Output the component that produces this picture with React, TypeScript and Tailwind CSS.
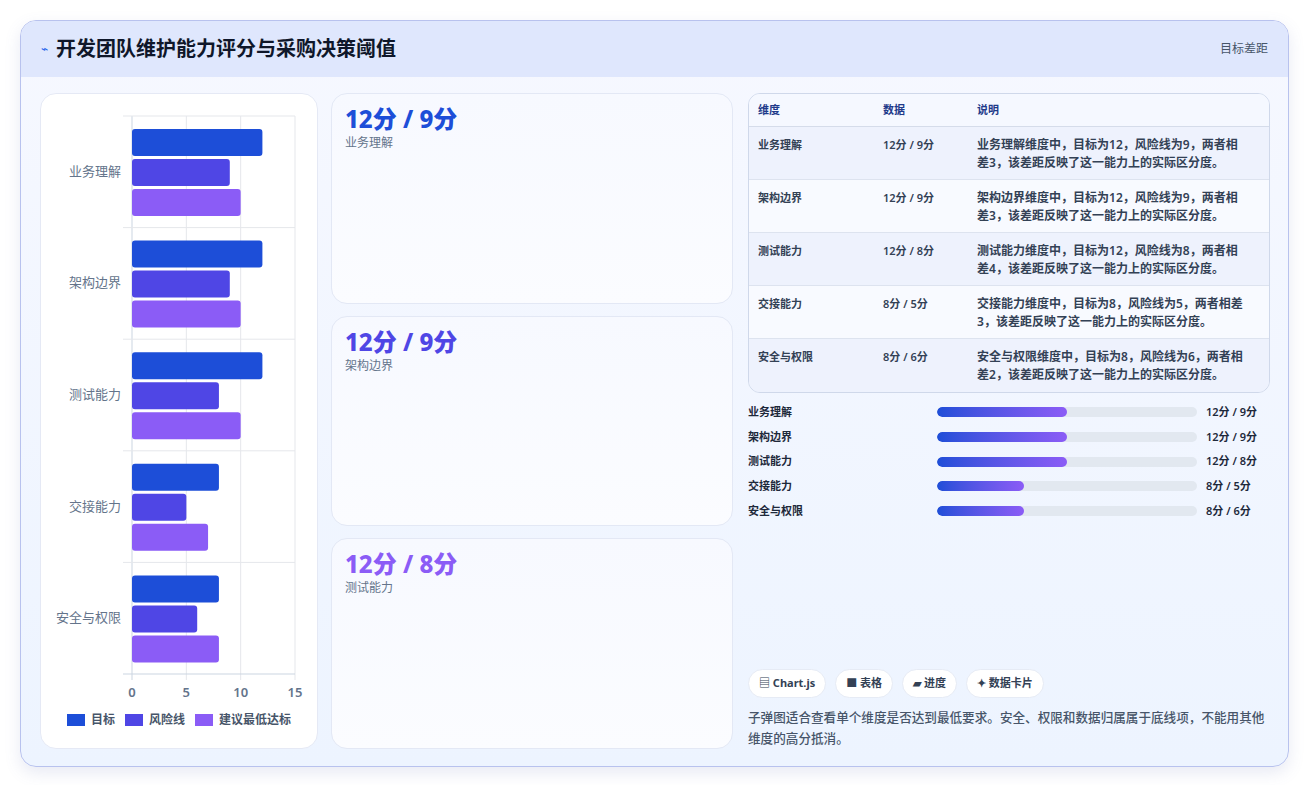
import React from "react";

const cats = [
  { n: "业务理解", t: 12, r: 9, m: 10 },
  { n: "架构边界", t: 12, r: 9, m: 10 },
  { n: "测试能力", t: 12, r: 8, m: 10 },
  { n: "交接能力", t: 8, r: 5, m: 7 },
  { n: "安全与权限", t: 8, r: 6, m: 8 },
];

function Chart() {
  const x0 = 91, u = (254 - 91) / 15, top = 22, ch = 111.6;
  const cols = ["#1d4ed8", "#4f46e5", "#8b5cf6"];
  return (
    <svg width="277" height="654" className="block">
      {[0, 5, 10, 15].map((v) => (
        <line key={v} x1={x0 + v * u} x2={x0 + v * u} y1={top} y2={top + 5 * ch + 6} stroke={v === 0 ? "#cbd5e1" : "#e5e7eb"} />
      ))}
      {[0, 1, 2, 3, 4, 5].map((i) => (
        <line key={i} x1={82} x2={254} y1={top + i * ch} y2={top + i * ch} stroke={i === 5 ? "#cbd5e1" : "#e5e7eb"} />
      ))}
      {cats.map((c, i) => {
        const y = top + i * ch;
        return (
          <g key={c.n}>
            <text x={80} y={y + ch / 2 + 4} textAnchor="end" fontSize="13" fill="#64748b" fontFamily="'Noto Sans CJK SC', sans-serif">{c.n}</text>
            {[c.t, c.r, c.m].map((v, j) => (
              <rect key={j} x={x0} y={y + 13 + j * 30} width={v * u} height={27} rx={3} fill={cols[j]} />
            ))}
          </g>
        );
      })}
      {[0, 5, 10, 15].map((v) => (
        <text key={v} x={x0 + v * u} y={603} textAnchor="middle" fontSize="13" fontWeight="600" fill="#64748b" fontFamily="'Noto Sans', sans-serif">{v}</text>
      ))}
      {[["目标", 26], ["风险线", 84], ["建议最低达标", 154]].map(([l, x], j) => (
        <g key={l as string}>
          <rect x={x as number} y={620} width={18} height={12} fill={cols[j]} />
          <text x={(x as number) + 24} y={630} fontSize="12" fill="#475569" fontWeight="600" fontFamily="'Noto Sans CJK SC', sans-serif">{l}</text>
        </g>
      ))}
    </svg>
  );
}

const cards = [
  { v: "12分 / 9分", l: "业务理解", c: "text-[#1d4ed8]" },
  { v: "12分 / 9分", l: "架构边界", c: "text-[#4f46e5]" },
  { v: "12分 / 8分", l: "测试能力", c: "text-[#8b5cf6]" },
];

export default function App() {
  return (
    <div className="w-[1309px] h-[785px] bg-white p-5" style={{ fontFamily: "'Noto Sans', 'Noto Sans CJK SC', sans-serif" }}>
      <div className="h-[747px] rounded-2xl border border-[#b8c2ee] overflow-hidden flex flex-col bg-gradient-to-b from-[#f6f8ff] to-[#edf4ff] shadow-[0_6px_16px_rgba(100,116,180,0.15)]">
        <div className="h-[56px] shrink-0 bg-[#dfe7fd] flex items-center px-5">
          <span className="text-[#2563eb] text-[12px] mr-2">⌁</span>
          <h1 className="text-[20px] font-bold text-[#0f172a]">开发团队维护能力评分与采购决策阈值</h1>
          <span className="ml-auto text-[12px] text-[#475569]">目标差距</span>
        </div>
        <div className="flex-1 flex gap-[13px] pl-[19px] pr-[18px] pt-[16px] pb-[18px]">
          <div className="w-[278px] bg-white rounded-2xl border border-[#e5e9f5]">
            <Chart />
          </div>
          <div className="w-[402px] flex flex-col gap-3">
            {cards.map((c) => (
              <div key={c.l} className="flex-1 rounded-2xl border border-[#e3e8f5] bg-gradient-to-b from-[#f7f9ff] to-[#fbfcff] px-[13px] py-[10px]">
                <div className={`text-[24px] font-extrabold leading-[30px] ${c.c}`}>{c.v}</div>
                <div className="text-[12px] text-[#64748b]">{c.l}</div>
              </div>
            ))}
          </div>
          <div className="flex-1 flex flex-col ml-[2px]">
            <div className="rounded-xl border border-[#cfd8ea] overflow-hidden">
              <div className="flex h-[33px] items-center bg-[#f5f8ff] border-b border-[#d5dcea] text-[11px] font-semibold text-[#1e3a8a] px-[9px]">
                <div className="w-[125px]">维度</div>
                <div className="w-[94px]">数据</div>
                <div>说明</div>
              </div>
              {cats.map((c, i) => (
                <div key={c.n} className={`flex h-[53px] pt-[9px] pl-[9px] pr-[20px] text-[11px] font-semibold text-[#334155] leading-[18px] ${i % 2 === 0 ? "bg-[#eef2fd]" : "bg-[#f8faff]"} ${i < 4 ? "border-b border-[#dde3ef]" : ""}`}>
                  <div className="w-[125px]">{c.n}</div>
                  <div className="w-[94px]">{c.t}分 / {c.r}分</div>
                  <div className="flex-1 text-[12px]">{c.n}维度中，目标为{c.t}，风险线为{c.r}，两者相差{c.t - c.r}，该差距反映了这一能力上的实际区分度。</div>
                </div>
              ))}
            </div>
            <div className="mt-[7px] flex flex-col">
              {cats.map((c) => (
                <div key={c.n} className="flex items-center h-[24.7px] text-[11px] font-semibold text-[#1e293b]">
                  <div className="w-[189px]">{c.n}</div>
                  <div className="w-[260px] h-[10px] rounded-full bg-[#e2e8f0] overflow-hidden">
                    <div className="h-full rounded-full bg-gradient-to-r from-[#1d4ed8] to-[#8b5cf6]" style={{ width: `${(c.t / 24) * 100}%` }} />
                  </div>
                  <div className="ml-[9px]">{c.t}分 / {c.r}分</div>
                </div>
              ))}
            </div>
            <div className="mt-auto flex gap-[9px]">
              {["▤ Chart.js", "■ 表格", "▰ 进度", "✦ 数据卡片"].map((t) => (
                <span key={t} className="h-[29px] px-[10px] flex items-center rounded-full bg-white border border-[#e6ebf5] text-[11px] font-bold text-[#334155]">{t}</span>
              ))}
            </div>
            <p className="mt-[9px] text-[12.6px] leading-[21px] text-[#475569] font-medium">子弹图适合查看单个维度是否达到最低要求。安全、权限和数据归属属于底线项，不能用其他维度的高分抵消。</p>
          </div>
        </div>
      </div>
    </div>
  );
}
